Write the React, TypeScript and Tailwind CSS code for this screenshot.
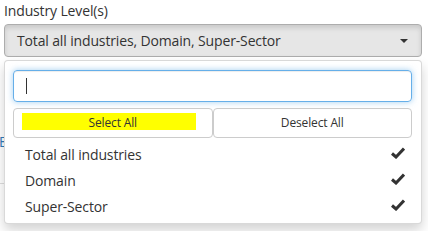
import React from "react";

const Check = () => (
  <svg width="14" height="12" viewBox="0 0 14 12" className="block -mt-[3px]">
    <path d="M1 6.5 L5 10 L13 1.5" fill="none" stroke="#333" strokeWidth="3" strokeLinejoin="miter" />
  </svg>
);

export default function App() {
  const items = ["Total all industries", "Domain", "Super-Sector"];
  return (
    <div
      className="relative w-[428px] h-[231px] overflow-hidden bg-white text-[#333] tracking-[-0.14px]"
      style={{ fontFamily: '"Open Sans", "Noto Sans", sans-serif' }}
    >
      <div className="pl-[4px] pt-[1px] h-[24px] text-[14px] leading-[20px]">Industry Level(s)</div>
      <div className="ml-[4px] w-[418px] h-[33px] rounded-[4px] border border-[#adadad] bg-[#e6e6e6] flex items-center pl-[12px] pr-[12px] text-[14px] shadow-[inset_0_3px_5px_rgba(0,0,0,0.125)]">
        <span className="flex-1 -mt-[1px]">Total all industries, Domain, Super-Sector</span>
        <span className="w-0 h-0 border-l-[4px] border-r-[4px] border-t-[4px] border-l-transparent border-r-transparent border-t-[#333] mr-[1px]"></span>
      </div>
      <div className="mt-[78px] text-[14px] text-[#337ab7] leading-[14px] -ml-[1px]">E</div>
      <div className="mt-[34px] h-px bg-[#ddd] w-[40px]"></div>

      <div className="absolute left-[4px] top-[60px] w-[418px] h-[164px] bg-white border border-[rgba(0,0,0,0.15)] rounded-[4px] shadow-[0_6px_12px_rgba(0,0,0,0.175)]">
        <div className="pl-[8px] pr-[9px] pt-[9px]">
          <div className="h-[32px] rounded-[4px] border border-[#66afe9] shadow-[inset_0_1px_1px_rgba(0,0,0,0.075),0_0_6px_rgba(102,175,233,0.6)] flex items-center pl-[12px]">
            <span className="w-px h-[16px] bg-[#333]"></span>
          </div>
          <div className="mt-[6px] flex h-[30px] text-[12px]">
            <div className="relative flex-1 rounded-[4px] border border-[#ccc] flex items-center justify-center">
              <div className="absolute left-[8px] top-[4px] w-[174px] h-[17px] bg-[#ffff00]"></div>
              <span className="relative">Select All</span>
            </div>
            <div className="flex-1 rounded-[4px] border border-[#ccc] flex items-center justify-center">
              Deselect All
            </div>
          </div>
        </div>
        <div className="mt-[3px]">
          {items.map((t) => (
            <div key={t} className="h-[26px] flex items-center pl-[20px] pr-[16px] text-[14px]">
              <span className="flex-1">{t}</span>
              <Check />
            </div>
          ))}
        </div>
      </div>
    </div>
  );
}
